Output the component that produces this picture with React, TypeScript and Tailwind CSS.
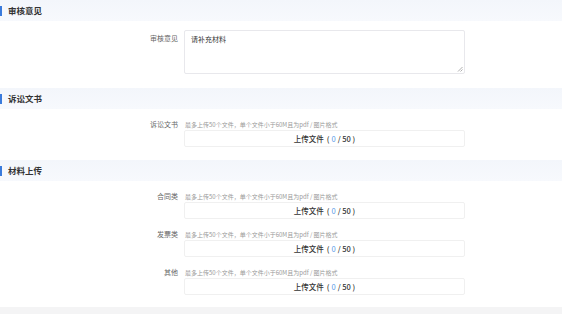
const font = { fontFamily: '"Noto Sans CJK SC", "Noto Sans", sans-serif' }

function SectionHeader({ title }: { title: string }) {
  return (
    <div className="flex h-[21px] items-center bg-gradient-to-b from-[#f3f6fb] to-[#f7f9fd]">
      <div className="h-[10px] w-[2px] bg-[#3a7bdc]" />
      <span className="ml-[6px] text-[8.5px] font-bold text-[#333]">{title}</span>
    </div>
  )
}

function UploadRow({ label }: { label: string }) {
  return (
    <div className="flex">
      <div className="w-[184px] pr-[6px] text-right text-[7px] leading-[9px] text-[#666]">{label}</div>
      <div className="w-[281px]">
        <div className="pl-[1px] text-[6px] leading-[9px] text-[#999]">最多上传50个文件，单个文件小于60M且为pdf / 图片格式</div>
        <div className="mt-[1px] flex h-[17px] items-center justify-center rounded-[2px] border border-[#f0f0f0] bg-white text-[7.5px] text-[#333]">
          <span className="font-medium">上传文件</span>
          <span className="ml-[3px] font-medium">(<span className="mx-[2px] font-normal text-[#5a9be6]">0</span>/ 50 )</span>
        </div>
      </div>
    </div>
  )
}

export default function App() {
  return (
    <div className="flex h-[314px] w-[562px] flex-col bg-white" style={font}>
      <SectionHeader title="审核意见" />
      <div className="mt-[9px] flex">
        <div className="w-[184px] pr-[6px] pt-[4px] text-right text-[7px] leading-[9px] text-[#666]">审核意见</div>
        <div className="relative h-[44px] w-[281px] rounded-[2px] border border-[#e8e8ec] bg-white px-[6px] pt-[4px] text-[7px] leading-[9px] text-[#333]">
          请补充材料
          <svg className="absolute bottom-[1px] right-[1px]" width="6" height="6" viewBox="0 0 6 6">
            <path d="M5.5 1 L1 5.5 M5.5 3.5 L3.5 5.5" stroke="#999" strokeWidth="0.8" />
          </svg>
        </div>
      </div>
      <div className="mt-[14px]">
        <SectionHeader title="诉讼文书" />
      </div>
      <div className="mt-[11px]">
        <UploadRow label="诉讼文书" />
      </div>
      <div className="mt-[13px]">
        <SectionHeader title="材料上传" />
      </div>
      <div className="mt-[11px] flex flex-col gap-[11px]">
        <UploadRow label="合同类" />
        <UploadRow label="发票类" />
        <UploadRow label="其他" />
      </div>
      <div className="mt-auto h-[7px] bg-[#f4f4f5]" />
    </div>
  )
}
